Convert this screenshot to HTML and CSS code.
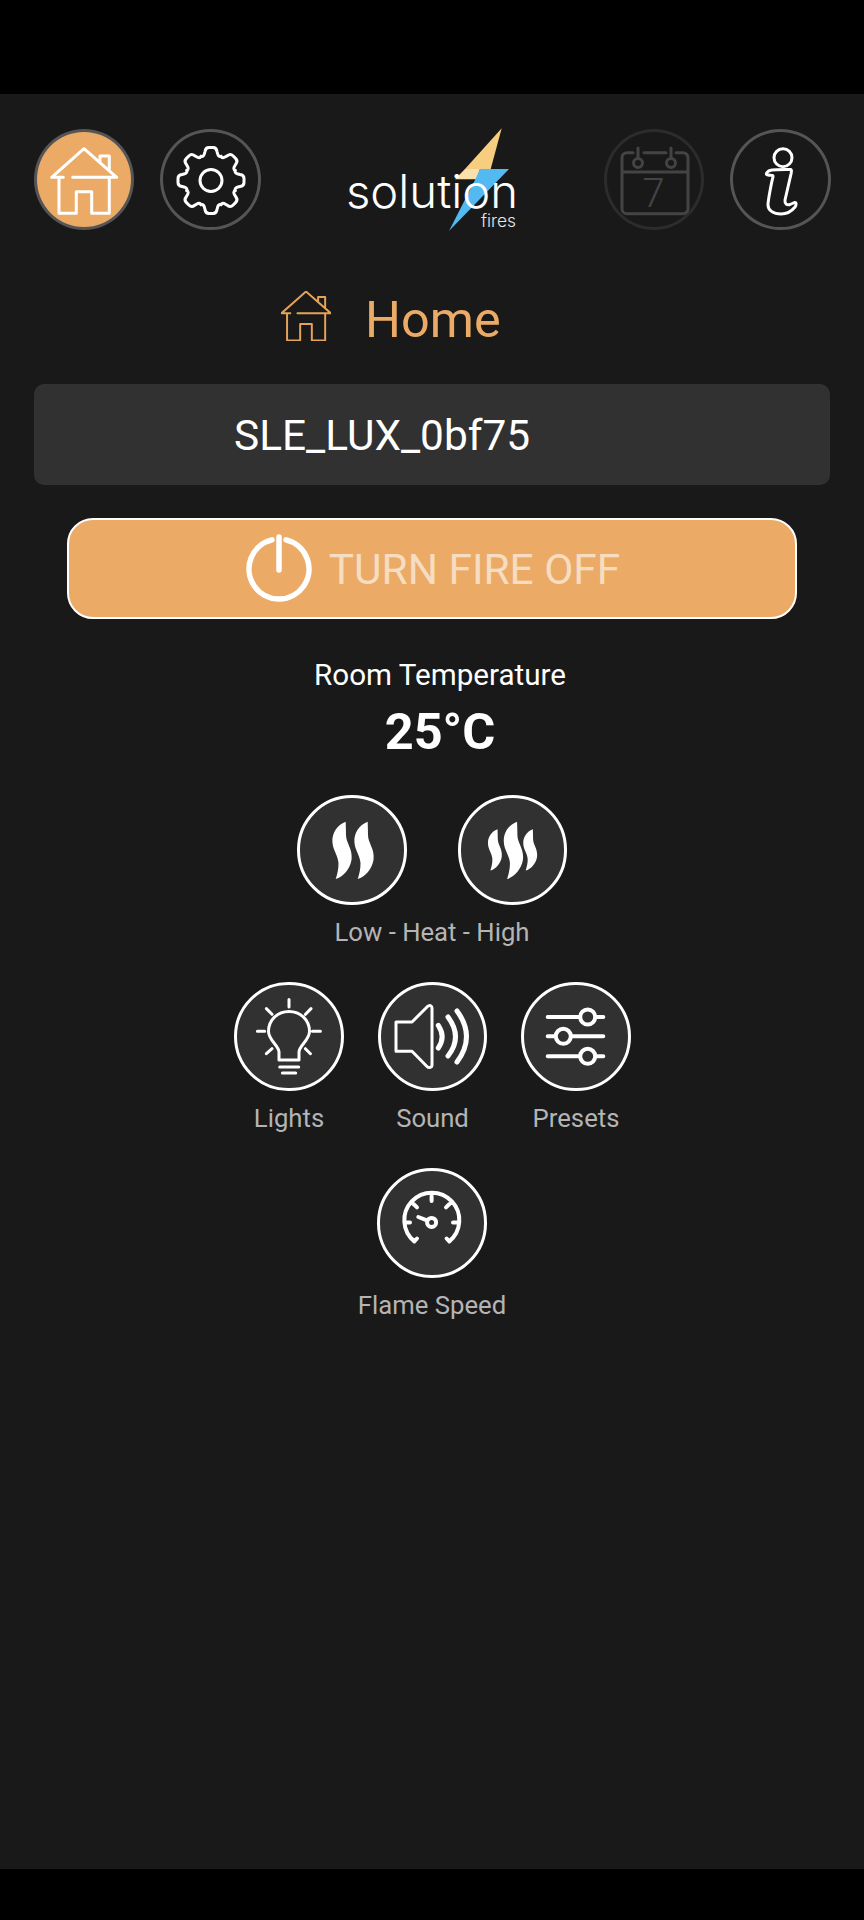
FILE: index.html
```html
<!DOCTYPE html>
<html lang="en">
<head>
<meta charset="utf-8">
<title>Solution Fires - Home</title>
<link rel="stylesheet" href="styles.css">
</head>
<body>
<div class="screen">
  <div class="bar-top"></div>
  <main class="app">
    <header class="header">
      <div class="nav-group">
        <button class="nav-btn nav-active">
          <svg class="ico line-2" viewBox="0 0 100 100"><path d="M29.3 47.3H17.7L50 18.7 82.7 47.3H38.7M25 47.3V83.3H42.3V61.7H57.7V83.3H75.3V47.3M66 32V26H75.3V39.3"/></svg>
        </button>
        <button class="nav-btn">
          <svg class="ico line-2" viewBox="0 0 100 100">
            <defs><path id="tooth" d="M40 26.3C42 27 43 25.5 43.5 23.5L44 21.5Q44.5 17.5 48 17.5H52Q55.5 17.5 56 21.5L56.5 23.5C57 25.5 58 27 60 26.3"/></defs>
            <use href="#tooth"/>
            <use href="#tooth" transform="rotate(45 50 50.5)"/>
            <use href="#tooth" transform="rotate(90 50 50.5)"/>
            <use href="#tooth" transform="rotate(135 50 50.5)"/>
            <use href="#tooth" transform="rotate(180 50 50.5)"/>
            <use href="#tooth" transform="rotate(225 50 50.5)"/>
            <use href="#tooth" transform="rotate(270 50 50.5)"/>
            <use href="#tooth" transform="rotate(315 50 50.5)"/>
            <circle cx="50" cy="50.5" r="11"/>
          </svg>
        </button>
      </div>
      <svg class="logo" viewBox="347 128 170 105">
        <polygon class="bolt-amber" points="501.7,128.3 465,169 490.7,169"/>
        <polygon class="bolt-cream" points="465,169 455,179.3 476.5,179.3 480,169"/>
        <polygon class="bolt-blue" points="480,169 509,169 449,231 475,180"/>
        <text class="logo-word" x="346" y="208" textLength="172" lengthAdjust="spacingAndGlyphs">solution</text>
        <text class="logo-sub" x="481" y="226.5" textLength="35" lengthAdjust="spacingAndGlyphs">fires</text>
      </svg>
      <div class="nav-group">
        <button class="nav-btn nav-dim">
          <svg class="ico line-dim" viewBox="0 0 100 100">
            <path d="M29 22.7H23A5 5 0 0 0 18 27.7V78.7A5 5 0 0 0 23 83.7H79A5 5 0 0 0 84 78.7V27.7A5 5 0 0 0 79 22.7H72M40 22.7H62M18 42H84M34 18V28M67 18V28"/>
            <circle cx="34" cy="33" r="4.5"/>
            <circle cx="67" cy="33" r="4.5"/>
            <text class="cal-num" x="49.5" y="77" text-anchor="middle">7</text>
          </svg>
        </button>
        <button class="nav-btn">
          <svg class="ico line-2" viewBox="0 0 100 100">
            <circle cx="52" cy="27.7" r="9"/>
            <path d="M36 42.5C38 39.5 42 39.8 60 39.5C61 40 60.3 42 60 44L54 70C53.5 74 56 75.5 59 74.5L63.5 72.5C65.5 72 65.5 75 64 77C60 82 55 84 50 84C42 84 37 80 37 75C37 70 41 50 42 47C42.5 44.5 40 45.5 37 45C35 45 35 43.5 36 42.5Z"/>
          </svg>
        </button>
      </div>
    </header>

    <div class="title-row">
      <svg class="title-ico line-2" viewBox="17 18 66 66"><path d="M29.3 47.3H17.7L50 18.7 82.7 47.3H38.7M25 47.3V83.3H42.3V61.7H57.7V83.3H75.3V47.3M66 32V26H75.3V39.3"/></svg>
      <h1 class="title">Home</h1>
    </div>

    <div class="device"><span class="nudge">SLE_LUX_0bf75</span></div>

    <button class="power">
      <svg class="power-ico" viewBox="0 0 70 70">
        <path d="M28 5.8A30 30 0 1 0 42 5.8M35 3V36"/>
      </svg>
      <span class="nudge">TURN FIRE OFF</span>
    </button>

    <section class="temp">
      <div class="temp-label">Room Temperature</div>
      <div class="temp-value">25°C</div>
    </section>

    <section class="heat">
      <div class="row row-heat">
        <button class="round">
          <svg class="ico-round fill-w" viewBox="0 0 110 110">
            <path d="M48.7 26.7C40 30 35 38 35.4 46.7C35.7 55 41 60 41.5 68C41.7 74 40 80 38.7 84C46 82 53 74 54.5 65C56 54 49 48 49 40C49 35 48.7 30 48.7 26.7Z"/>
            <path transform="translate(22 0)" d="M48.7 26.7C40 30 35 38 35.4 46.7C35.7 55 41 60 41.5 68C41.7 74 40 80 38.7 84C46 82 53 74 54.5 65C56 54 49 48 49 40C49 35 48.7 30 48.7 26.7Z"/>
          </svg>
        </button>
        <button class="round">
          <svg class="ico-round fill-w" viewBox="0 0 110 110">
            <path transform="translate(4.5 15.1) scale(.72)" d="M48.7 26.7C40 30 35 38 35.4 46.7C35.7 55 41 60 41.5 68C41.7 74 40 80 38.7 84C46 82 53 74 54.5 65C56 54 49 48 49 40C49 35 48.7 30 48.7 26.7Z"/>
            <path transform="translate(10.4 0)" d="M48.7 26.7C40 30 35 38 35.4 46.7C35.7 55 41 60 41.5 68C41.7 74 40 80 38.7 84C46 82 53 74 54.5 65C56 54 49 48 49 40C49 35 48.7 30 48.7 26.7Z"/>
            <path transform="translate(39.8 15.1) scale(.72)" d="M48.7 26.7C40 30 35 38 35.4 46.7C35.7 55 41 60 41.5 68C41.7 74 40 80 38.7 84C46 82 53 74 54.5 65C56 54 49 48 49 40C49 35 48.7 30 48.7 26.7Z"/>
          </svg>
        </button>
      </div>
      <div class="caption">Low - Heat - High</div>
    </section>

    <section class="row row-tools">
      <div class="tile">
        <button class="round">
          <svg class="ico-round line-2" viewBox="0 0 110 110">
            <path d="M45 78V70C45 64 34.5 58 34.5 49.5C34.5 38 43.5 29.5 55 29.5C66.5 29.5 75.5 38 75.5 49.5C75.5 58 65 64 65 70V78ZM45.7 85H64.7M48.4 91H61.7M55 17.6V25M32.4 26.6 38 32.3M77 26.6 71.5 32.3M23.4 49.3H30.7M78.4 49.3H86.4M32.4 71.7 38 66.7M76.4 71.7 71.4 66.7"/>
          </svg>
        </button>
        <div class="caption">Lights</div>
      </div>
      <div class="tile">
        <button class="round">
          <svg class="ico-round line-2" viewBox="0 0 110 110">
            <path d="M18 40H34L49.5 24.5C51.5 22.5 54 23.5 54 26V83C54 85.5 51 86.5 49 84.5L34 69.3H18Z"/>
            <path class="wave" d="M60.3 43.3Q68 55 60.3 66M70 35Q85 55 70 74M79 29Q98 54.5 79 80"/>
          </svg>
        </button>
        <div class="caption">Sound</div>
      </div>
      <div class="tile">
        <button class="round">
          <svg class="ico-round line-3" viewBox="0 0 110 110">
            <path d="M26.7 35H82.3M26.7 54.3H82.3M26.7 74.3H82.3"/>
            <circle class="knob" cx="66.7" cy="35" r="7.5"/>
            <circle class="knob" cx="42.3" cy="54.3" r="7.5"/>
            <circle class="knob" cx="66.7" cy="74.3" r="7.5"/>
          </svg>
        </button>
        <div class="caption">Presets</div>
      </div>
    </section>

    <section class="tile tile-last">
      <button class="round">
        <svg class="ico-round line-3" viewBox="0 0 110 110">
          <path d="M37.3 73.4A27.5 27.5 0 1 1 72.3 73.4M37.3 73.4 40 70.5M72.3 73.4 69.6 70.5M54.6 28V33M28 54.4H33M76 54.4H81M36.5 36 40 39.4M72.5 36 69 39.4M41.3 49 50 52.4"/>
          <circle class="knob" cx="54.6" cy="54.4" r="4.5"/>
        </svg>
      </button>
      <div class="caption">Flame Speed</div>
    </section>
  </main>
  <div class="bar-bottom"></div>
</div>
</body>
</html>
```
FILE: styles.css
```css
* { box-sizing: border-box; }
html, body { margin: 0; padding: 0; background: #000; }
body { font-family: Roboto, "Liberation Sans", sans-serif; color: #fff; }
button { font: inherit; color: inherit; padding: 0; cursor: pointer; }

.screen { width: 864px; height: 1920px; display: flex; flex-direction: column; }
.bar-top { height: 94px; background: #000; }
.bar-bottom { height: 51px; background: #000; }
.app { flex: 1; background: #191919; display: flex; flex-direction: column; }

.header { display: flex; justify-content: space-between; align-items: flex-start; padding: 35px 33.5px 0; height: 136px; }
.nav-group { display: flex; gap: 26px; }
.nav-btn { width: 100.5px; height: 101px; border-radius: 50%; border: 3px solid #555; background: transparent; display: flex; }
.nav-active { background: #ebab66; }
.nav-dim { border-color: #2c2c2c; }
.ico { width: 100px; height: 100px; margin: -2.5px 0 0 -2.5px; flex: none; }
.line-2, .line-dim, .line-3 { fill: none; stroke-linecap: round; stroke-linejoin: round; }
.line-2 { stroke: #fff; stroke-width: 3; }
.line-dim { stroke: #444; stroke-width: 3; }
.line-3 { stroke: #fff; stroke-width: 4; }
.cal-num { font-family: Roboto, sans-serif; font-weight: 300; font-size: 40px; fill: #444; stroke: none; }

.logo { width: 170px; height: 105px; margin-top: -1px; flex: none; overflow: visible; }
.bolt-amber { fill: #f7cd80; }
.bolt-cream { fill: #fbe0ac; }
.bolt-blue { fill: #52baf0; }
.logo-word { font-family: Inter, sans-serif; font-weight: 300; font-size: 46px; fill: #fff; }
.logo-sub { font-family: Inter, sans-serif; font-weight: 300; font-size: 17px; fill: #e6e6e6; }

.title-row { display: flex; align-items: flex-start; gap: 34px; padding: 61px 0 0 281px; height: 112px; }
.title-ico { width: 50px; height: 50px; stroke: #e5a25a; stroke-width: 2.6; flex: none; }
.title { margin: 3px 0 0; font-size: 50.4px; line-height: 51px; font-weight: 400; color: #ebab66; }

.nudge { position: relative; top: 1px; }
.device { margin: 42px 34px 0; height: 101px; background: #313131; border-radius: 10px; padding-left: 200px; display: flex; align-items: center; font-size: 42.4px; color: #fff; }

.power { margin: 33px 67px 0; height: 101px; border: 2.5px solid #fff; border-radius: 26px; background: #ebab66; display: flex; align-items: center; justify-content: center; gap: 15px; font-size: 42.4px; color: rgba(255, 255, 255, .6); }
.power-ico { width: 70px; height: 70px; fill: none; stroke: #fff; stroke-width: 5.5; stroke-linecap: round; flex: none; }

.temp { margin-top: 39px; padding-left: 16px; text-align: center; }
.temp-label { font-size: 29.6px; line-height: 34px; }
.temp-value { font-size: 50.5px; line-height: 60px; font-weight: 700; margin-top: 10px; }

.heat { margin-top: 33px; display: flex; flex-direction: column; align-items: center; }
.row { display: flex; justify-content: center; }
.row-heat { gap: 51px; }
.row-tools { gap: 34px; margin-top: 35px; padding-left: 1px; }
.round { width: 109.5px; height: 109.5px; border-radius: 50%; border: 3px solid #fff; background: #313131; display: flex; flex: none; }
.ico-round { width: 110px; height: 110px; margin: -3px; flex: none; }
.fill-w { fill: #fff; }
.wave { stroke-width: 5; }
.knob { fill: #313131; }

.caption { font-size: 25.7px; line-height: 30px; color: #b4b4b4; margin-top: 12px; white-space: nowrap; }
.tile { display: flex; flex-direction: column; align-items: center; width: 109.5px; }
.tile-last { align-self: center; margin-top: 35px; }
```
